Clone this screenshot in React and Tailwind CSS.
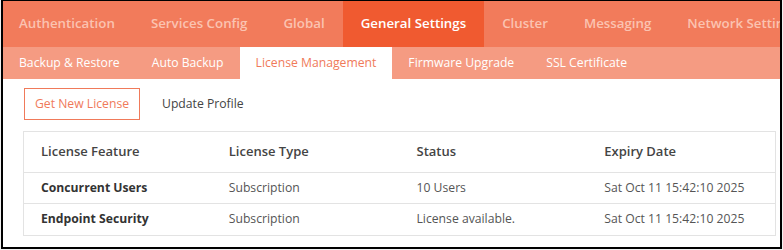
import React from 'react';

const topTabs = ['Authentication', 'Services Config', 'Global', 'General Settings', 'Cluster', 'Messaging', 'Network Settings'];
const subTabs = ['Backup & Restore', 'Auto Backup', 'License Management', 'Firmware Upgrade', 'SSL Certificate'];

const rows = [
  { feature: 'Concurrent Users', type: 'Subscription', status: '10 Users', expiry: 'Sat Oct 11 15:42:10 2025' },
  { feature: 'Endpoint Security', type: 'Subscription', status: 'License available.', expiry: 'Sat Oct 11 15:42:10 2025' },
];

const App = () => {
  return (
    <div className="w-[783px] h-[250px] bg-[#f0f0f0] pl-px overflow-hidden" style={{ fontFamily: '"Open Sans", "Noto Sans", sans-serif' }}>
      <div className="w-[781px] h-[249px] border-t border-r-2 border-b-2 border-l-2 border-black bg-white overflow-hidden">
        {/* top nav */}
        <div className="-ml-[2px] flex h-[46px] bg-[#f27b5b] whitespace-nowrap">
          {topTabs.map(t => (
            <div
              key={t}
              className={`flex items-center px-[18px] text-[13.3px] font-semibold ${t === 'General Settings' ? 'bg-[#f05a30] text-white' : 'text-[#fbc3b1]'}`}
            >
              {t}
            </div>
          ))}
        </div>

        {/* sub nav */}
        <div className="flex h-[32px] bg-[#f59b82] whitespace-nowrap">
          {subTabs.map(t => (
            <div
              key={t}
              className={`flex items-center px-4 text-[12.2px] ${t === 'License Management' ? 'bg-white text-[#f07a5a]' : 'text-white'}`}
            >
              {t}
            </div>
          ))}
        </div>

        <div className="pl-5 pr-[4px]">
          <div className="flex items-center mt-[9px]">
            <button className="ml-px h-8 w-[116px] border border-[#f07a5a] text-[#f07a5a] text-[12.2px]">Get New License</button>
            <span className="ml-[22px] text-[12.2px] text-[#444]">Update Profile</span>
          </div>

          <div className="mt-[11px] border border-[#e3e3e3]">
            <div className="grid grid-cols-4 h-[41px] items-center border-b border-[#e3e3e3] text-[13px] font-semibold text-[#444]">
              <div className="pl-[17px]">License Feature</div>
              <div className="pl-[17px]">License Type</div>
              <div className="pl-[17px]">Status</div>
              <div className="pl-[17px]">Expiry Date</div>
            </div>
            {rows.map((r, i) => (
              <div key={r.feature} className={`grid grid-cols-4 h-[31px] items-center text-[12.2px] text-[#555] ${i === 0 ? 'border-b border-[#e3e3e3]' : ''}`}>
                <div className="pl-[17px] font-bold text-[#333]">{r.feature}</div>
                <div className="pl-[17px]">{r.type}</div>
                <div className="pl-[17px]">{r.status}</div>
                <div className="pl-[17px]">{r.expiry}</div>
              </div>
            ))}
          </div>
        </div>
      </div>
    </div>
  );
};

export default App;
